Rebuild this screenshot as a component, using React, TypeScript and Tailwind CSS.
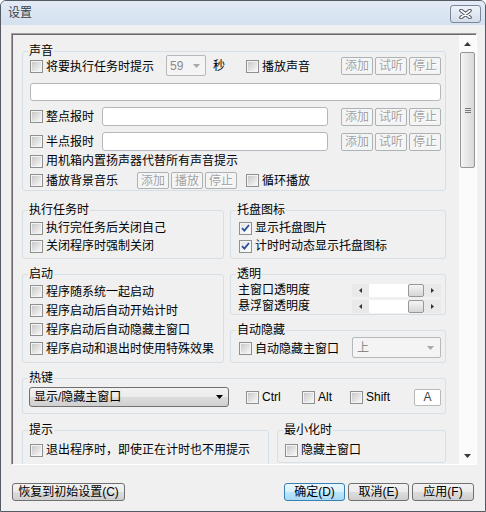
import React from "react";

const Check = ({
  label,
  checked = false,
  className = "",
}: {
  label: string;
  checked?: boolean;
  className?: string;
}) => (
  <div className={`flex items-center gap-[3px] ${className}`}>
    <span className="flex h-[13px] w-[13px] shrink-0 border border-[#8e8f8f] bg-[#f4f4f4] p-[1px]">
      <span
        className={`flex flex-1 items-center justify-center bg-linear-to-br ${
          checked ? "from-[#e4e4e4] to-white" : "from-[#c9c9c9] to-[#f7f7f7]"
        }`}
      >
        {checked && (
          <svg width="9" height="8" viewBox="0 0 9 8">
            <path d="M1 4.2 L3.4 6.6 L8 1" fill="none" stroke="#2d4f93" strokeWidth="1.8" />
          </svg>
        )}
      </span>
    </span>
    <span className="whitespace-nowrap text-[12px] leading-[14px] text-black">{label}</span>
  </div>
);

const Group = ({
  title,
  className = "",
  children,
}: {
  title: string;
  className?: string;
  children?: React.ReactNode;
}) => (
  <div className={`relative rounded-[3px] border border-[#d5dfe5] ${className}`}>
    <span className="absolute -top-[8px] left-[5px] bg-[#f0f0f0] px-[1px] text-[12px] leading-[14px] text-black">
      {title}
    </span>
    {children}
  </div>
);

const DisBtn = ({ label, h = "h-[18px]" }: { label: string; h?: string }) => (
  <div
    className={`flex w-[32px] items-center justify-center rounded-[2px] border border-[#adb2b5] bg-[#f4f4f4] text-[12px] leading-[14px] text-[#a2a2a2] [text-shadow:1px_1px_0_#ffffff] ${h}`}
  >
    {label}
  </div>
);

const Down = ({ color = "#000" }: { color?: string }) => (
  <svg width="7" height="4" viewBox="0 0 7 4">
    <polygon points="0,0 7,0 3.5,4" fill={color} />
  </svg>
);

const Slider = () => (
  <div className="flex h-[13px] w-[89px]">
    <div className="flex w-[17px] items-center justify-center bg-[#e9e9e9]">
      <svg width="3" height="5" viewBox="0 0 3 5">
        <polygon points="3,0 3,5 0,2.5" fill="#333" />
      </svg>
    </div>
    <div className="w-[39px] bg-white" />
    <div className="w-[16px] rounded-[2px] border border-[#979797] bg-linear-to-b from-[#f5f5f5] to-[#d6d6d6]" />
    <div className="flex flex-1 items-center justify-center bg-[#e9e9e9]">
      <svg width="3" height="5" viewBox="0 0 3 5">
        <polygon points="0,0 0,5 3,2.5" fill="#333" />
      </svg>
    </div>
  </div>
);

const TextBox = ({ className = "" }: { className?: string }) => (
  <div className={`rounded-[3px] border border-[#b4b8be] bg-white ${className}`} />
);

const WinBtn = ({ label, w, primary = false }: { label: string; w: string; primary?: boolean }) => (
  <div
    className={`flex h-[18px] items-center justify-center rounded-[3px] border text-[12px] leading-[14px] text-black ${w} ${
      primary
        ? "border-[#3c7fb1] bg-[linear-gradient(#eaf6fd,#d9f0fc_50%,#bee6fd_50%,#a7d9f5)]"
        : "border-[#707070] bg-[linear-gradient(#f2f2f2,#ebebeb_50%,#dddddd_50%,#cfcfcf)]"
    }`}
  >
    {label}
  </div>
);

export default function App() {
  return (
    <div className="flex h-[512px] w-[486px] flex-col overflow-hidden rounded-t-[6px] border border-[#555b63] bg-[#f0f0f0] font-['Liberation_Sans','Noto_Sans_CJK_SC',sans-serif]">
      {/* title bar */}
      <div className="flex h-[24px] shrink-0 items-center justify-between bg-linear-to-b from-[#e2ebf6] to-[#d5e1f0] pl-[7px] pr-[4px]">
        <span className="text-[12px] leading-[14px] text-[#3a3f47]">设置</span>
        <div className="mt-[1px] flex h-[18px] w-[31px] items-center justify-center rounded-[3px] border border-[#7b8797] bg-linear-to-b from-[#eef3f9] to-[#d3ddea]">
          <svg width="13" height="10" viewBox="0 0 13 10">
            <path d="M2 1.5 L11 8.5 M11 1.5 L2 8.5" stroke="#4b5563" strokeWidth="3.6" strokeLinecap="round" />
            <path d="M2 1.5 L11 8.5 M11 1.5 L2 8.5" stroke="#ffffff" strokeWidth="1.6" strokeLinecap="round" />
          </svg>
        </div>
      </div>

      {/* body */}
      <div className="flex flex-1 flex-col pl-[10px] pr-[8px] pt-[8px]">
        {/* sunken scroll panel */}
        <div className="flex h-[432px] w-[466px] border border-b-white border-l-[#a0a0a0] border-r-white border-t-[#a0a0a0]">
          <div className="flex flex-1 border-l border-t border-[#696969]">
            {/* content */}
            <div className="flex-1 overflow-hidden pl-[9px]">
              {/* 声音 */}
              <Group title="声音" className="mt-[16px] h-[140px] w-[424px] pl-[7px] pr-[4px] pt-[3px]">
                <div className="flex h-[21px] items-center">
                  <Check label="将要执行任务时提示" className="w-[136px] pt-[2px]" />
                  <div className="flex h-[21px] w-[40px] items-center justify-between rounded-[2px] border border-[#b5b9bd] bg-[#f4f4f4] pl-[3px] pr-[5px]">
                    <span className="text-[12px] leading-[14px] text-[#8a8a8a]">59</span>
                    <Down color="#a8a8a8" />
                  </div>
                  <span className="w-[40px] pl-[7px] text-[12px] leading-[14px]">秒</span>
                  <Check label="播放声音" className="pt-[2px]" />
                  <div className="ml-auto flex gap-[2px]">
                    <DisBtn label="添加" />
                    <DisBtn label="试听" />
                    <DisBtn label="停止" />
                  </div>
                </div>
                <TextBox className="mt-[7px] h-[18px] w-full" />
                <div className="mt-[6px] flex h-[19px] items-center">
                  <Check label="整点报时" className="w-[72px]" />
                  <TextBox className="h-[19px] w-[226px]" />
                  <div className="ml-auto flex gap-[2px]">
                    <DisBtn label="添加" />
                    <DisBtn label="试听" />
                    <DisBtn label="停止" />
                  </div>
                </div>
                <div className="mt-[6px] flex h-[19px] items-center">
                  <Check label="半点报时" className="w-[72px]" />
                  <TextBox className="h-[19px] w-[226px]" />
                  <div className="ml-auto flex gap-[2px]">
                    <DisBtn label="添加" />
                    <DisBtn label="试听" />
                    <DisBtn label="停止" />
                  </div>
                </div>
                <div className="flex h-[20px] items-center">
                  <Check label="用机箱内置扬声器代替所有声音提示" />
                </div>
                <div className="flex h-[19px] items-center">
                  <Check label="播放背景音乐" className="w-[107px]" />
                  <div className="flex gap-[2px]">
                    <DisBtn label="添加" h="h-[17px]" />
                    <DisBtn label="播放" h="h-[17px]" />
                    <DisBtn label="停止" h="h-[17px]" />
                  </div>
                  <Check label="循环播放" className="ml-[9px]" />
                </div>
              </Group>

              {/* row: 执行任务时 / 托盘图标 */}
              <div className="mt-[19px] flex w-[424px] gap-[6px]">
                <Group title="执行任务时" className="h-[49px] w-[202px] pl-[7px] pt-[8px]">
                  <div className="flex h-[18px] items-center">
                    <Check label="执行完任务后关闭自己" />
                  </div>
                  <div className="flex h-[18px] items-center">
                    <Check label="关闭程序时强制关闭" />
                  </div>
                </Group>
                <Group title="托盘图标" className="h-[49px] flex-1 pl-[8px] pt-[8px]">
                  <div className="flex h-[18px] items-center">
                    <Check label="显示托盘图片" checked />
                  </div>
                  <div className="flex h-[18px] items-center">
                    <Check label="计时时动态显示托盘图标" checked />
                  </div>
                </Group>
              </div>

              {/* row: 启动 / 透明 + 自动隐藏 */}
              <div className="mt-[15px] flex w-[424px] gap-[6px]">
                <Group title="启动" className="h-[89px] w-[202px] pl-[7px] pt-[7px]">
                  <div className="flex h-[19px] items-center">
                    <Check label="程序随系统一起启动" />
                  </div>
                  <div className="flex h-[19px] items-center">
                    <Check label="程序启动后自动开始计时" />
                  </div>
                  <div className="flex h-[19px] items-center">
                    <Check label="程序启动后自动隐藏主窗口" />
                  </div>
                  <div className="flex h-[19px] items-center">
                    <Check label="程序启动和退出时使用特殊效果" />
                  </div>
                </Group>
                <div className="flex flex-1 flex-col gap-[15px]">
                  <Group title="透明" className="h-[41px] pl-[7px] pr-[4px] pt-[7px]">
                    <div className="flex h-[16px] items-center justify-between">
                      <span className="text-[12px] leading-[14px]">主窗口透明度</span>
                      <Slider />
                    </div>
                    <div className="flex h-[16px] items-center justify-between">
                      <span className="text-[12px] leading-[14px]">悬浮窗透明度</span>
                      <Slider />
                    </div>
                  </Group>
                  <Group title="自动隐藏" className="h-[33px] pl-[8px] pr-[4px] pt-[6px]">
                    <div className="flex h-[21px] items-center justify-between">
                      <Check label="自动隐藏主窗口" className="pt-[2px]" />
                      <div className="flex h-[21px] w-[89px] items-center justify-between rounded-[2px] border border-[#b5b9bd] bg-[#f4f4f4] pl-[4px] pr-[6px]">
                        <span className="text-[12px] leading-[14px] text-[#8a8a8a]">上</span>
                        <Down color="#a8a8a8" />
                      </div>
                    </div>
                  </Group>
                </div>
              </div>

              {/* 热键 */}
              <Group title="热键" className="mt-[15px] h-[36px] w-[424px] pl-[6px] pr-[4px] pt-[8px]">
                <div className="flex h-[20px] items-center">
                  <div className="flex h-[20px] w-[200px] items-center justify-between rounded-[3px] border border-[#707070] bg-[linear-gradient(#f2f2f2,#ebebeb_50%,#dddddd_50%,#cfcfcf)] pl-[4px] pr-[5px]">
                    <span className="text-[12px] leading-[14px]">显示/隐藏主窗口</span>
                    <Down />
                  </div>
                  <Check label="Ctrl" className="ml-[17px] w-[56px]" />
                  <Check label="Alt" className="w-[48px]" />
                  <Check label="Shift" />
                  <div className="ml-auto flex h-[17px] w-[27px] items-center justify-center rounded-[2px] border border-[#b5b9bd] bg-white text-[12px] leading-[14px] text-[#444]">
                    A
                  </div>
                </div>
              </Group>

              {/* 提示 / 最小化时 */}
              <div className="mt-[16px] flex w-[424px] gap-[8px]">
                <Group title="提示" className="h-[60px] w-[247px] pl-[7px] pt-[10px]">
                  <div className="flex h-[18px] items-center">
                    <Check label="退出程序时，即使正在计时也不用提示" />
                  </div>
                </Group>
                <Group title="最小化时" className="h-[33px] flex-1 pl-[7px] pt-[10px]">
                  <div className="flex h-[18px] items-center">
                    <Check label="隐藏主窗口" />
                  </div>
                </Group>
              </div>
            </div>

            {/* scrollbar */}
            <div className="flex w-[17px] flex-col bg-[#fbfbfb]">
              <div className="flex h-[17px] items-center justify-center">
                <svg width="7" height="4" viewBox="0 0 7 4">
                  <polygon points="3.5,0 7,4 0,4" fill="#3a3a3a" />
                </svg>
              </div>
              <div className="mx-[1px] flex h-[116px] items-center justify-center rounded-[2px] border border-[#979797] bg-linear-to-r from-[#f4f4f4] to-[#d9d9d9]">
                <div className="flex flex-col gap-[1px]">
                  <div className="h-[1px] w-[6px] bg-[#7a7a7a]" />
                  <div className="h-[1px] w-[6px] bg-[#7a7a7a]" />
                  <div className="h-[1px] w-[6px] bg-[#7a7a7a]" />
                </div>
              </div>
              <div className="flex-1" />
              <div className="flex h-[17px] items-center justify-center">
                <Down color="#3a3a3a" />
              </div>
            </div>
          </div>
        </div>

        {/* bottom buttons */}
        <div className="mt-[18px] flex items-center">
          <div className="ml-[1px]">
            <WinBtn label="恢复到初始设置(C)" w="w-[113px]" />
          </div>
          <div className="ml-auto mr-[3px] flex gap-[3px]">
            <WinBtn label="确定(D)" w="w-[61px]" primary />
            <WinBtn label="取消(E)" w="w-[61px]" />
            <WinBtn label="应用(F)" w="w-[62px]" />
          </div>
        </div>
      </div>
    </div>
  );
}
